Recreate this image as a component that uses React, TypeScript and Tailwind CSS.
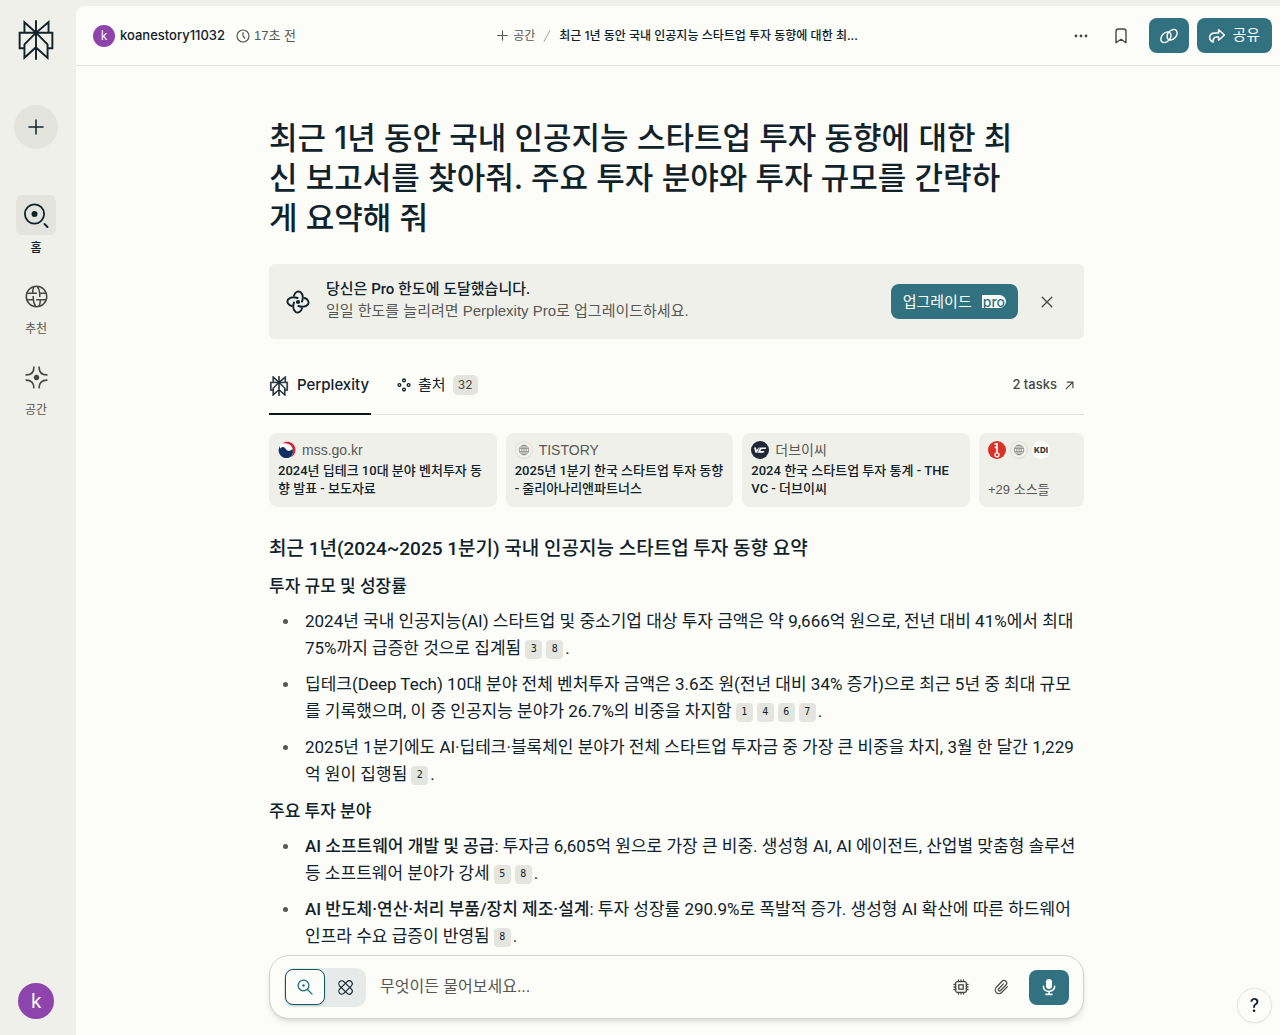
import React, { useState } from "react";
import { SiPerplexity } from "react-icons/si";

type IconProps = { className?: string };

function SearchDotIcon({ className }: IconProps) {
  return (
    <svg viewBox="0 0 26 26" className={className} fill="none" stroke="currentColor" strokeWidth="1.8" strokeLinecap="round" aria-hidden="true">
      <circle cx="11.5" cy="12" r="9.6" />
      <circle cx="11.5" cy="12" r="3" fill="currentColor" stroke="none" />
      <path d="M21.5 22l3 3" />
    </svg>
  );
}

function DiscoverIcon({ className }: IconProps) {
  return (
    <svg viewBox="0 0 24 24" className={className} fill="none" stroke="currentColor" strokeWidth="1.6" aria-hidden="true">
      <circle cx="12" cy="12" r="10.7" />
      <path d="M2.2 8.6H12.4M11.6 15.4H21.8M8.6 11.6V15.4H1.9M15.4 12.4V8.6H22.1M8.6 15C9 18.6 9.8 20.8 11.4 22.6M15.4 9C15 5.4 14.2 3.2 12.6 1.4M9.2 1.8C8.4 3.8 8 6 8 8.4M14.8 22.2C15.6 20.2 16 18 16 15.6" />
    </svg>
  );
}

function SpacesIcon({ className }: IconProps) {
  return (
    <svg viewBox="0 0 24 24" className={className} fill="none" stroke="currentColor" strokeWidth="1.7" strokeLinecap="round" aria-hidden="true">
      <path d="M9.3 1.2C9.3 6.2 6.4 9.3 1.2 9.3M14.7 1.2C14.7 6.2 17.6 9.3 22.8 9.3M1.2 14.7C6.4 14.7 9.3 17.8 9.3 22.8M22.8 14.7C17.6 14.7 14.7 17.8 14.7 22.8" />
      <circle cx="12" cy="12" r="2.8" fill="currentColor" stroke="none" />
    </svg>
  );
}

function PlusIcon({ className }: IconProps) {
  return (
    <svg viewBox="0 0 16 16" className={className} fill="none" stroke="currentColor" strokeWidth="1.5" strokeLinecap="round" aria-hidden="true">
      <path d="M8 1v14M1 8h14" />
    </svg>
  );
}

function ClockIcon({ className }: IconProps) {
  return (
    <svg viewBox="0 0 14 14" className={className} fill="none" stroke="currentColor" strokeWidth="1.2" strokeLinecap="round" aria-hidden="true">
      <circle cx="7" cy="7" r="6" />
      <path d="M7 3.5V7l1.7 2" />
    </svg>
  );
}

function LinkIcon({ className }: IconProps) {
  return (
    <svg viewBox="0 0 20 20" className={className} fill="none" stroke="currentColor" strokeWidth="1.4" strokeLinecap="round" aria-hidden="true">
      <ellipse cx="6.9" cy="11.3" rx="6" ry="4.2" transform="rotate(-48 6.9 11.3)" />
      <ellipse cx="13.1" cy="8.7" rx="6" ry="4.2" transform="rotate(-48 13.1 8.7)" />
    </svg>
  );
}

function ShareIcon({ className }: IconProps) {
  return (
    <svg viewBox="0 0 18 18" className={className} fill="none" stroke="currentColor" strokeWidth="1.5" strokeLinejoin="round" strokeLinecap="round" aria-hidden="true">
      <path d="M10.6 2.8L16.4 8L10.6 13.2V10H8.6C6 10 4.8 12 5 15.2C2.6 14 1.5 12.3 1.6 10.3C1.8 7.4 4 5.9 7 5.9H10.6Z" />
    </svg>
  );
}

function BookmarkIcon({ className }: IconProps) {
  return (
    <svg viewBox="0 0 12 16" className={className} fill="none" stroke="currentColor" strokeWidth="1.4" strokeLinejoin="round" aria-hidden="true">
      <path d="M1 14.8V3.3C1 2 2 1 3.3 1H8.7C10 1 11 2 11 3.3V14.8L6 11.3Z" />
    </svg>
  );
}

// four hooked arms turning round a dot
function ProSwirlIcon({ className }: IconProps) {
  return (
    <svg viewBox="0 0 24 24" className={className} fill="none" stroke="currentColor" strokeWidth="1.9" strokeLinecap="round" aria-hidden="true">
      <circle cx="12" cy="12" r="2.1" fill="currentColor" stroke="none" />
      {[0, 90, 180, 270].map((angle) => (
        <path key={angle} d="M16 11.6C17.2 8 16.8 3.8 14.4 2C12 .6 8.8 2.2 8 5.6" transform={`rotate(${angle} 12 12)`} />
      ))}
    </svg>
  );
}

function SourcesIcon({ className }: IconProps) {
  return (
    <svg viewBox="0 0 14 14" className={className} fill="none" stroke="currentColor" strokeWidth="1.3" aria-hidden="true">
      <circle cx="7" cy="2.4" r="1.4" />
      <circle cx="7" cy="11.6" r="1.4" />
      <circle cx="2.4" cy="7" r="1.4" />
      <circle cx="11.6" cy="7" r="1.4" />
    </svg>
  );
}

function ArrowUpRightIcon({ className }: IconProps) {
  return (
    <svg viewBox="0 0 10 10" className={className} fill="none" stroke="currentColor" strokeWidth="1.3" aria-hidden="true">
      <path d="M1 9L9 1M2 1.2H8.8V8" />
    </svg>
  );
}

function CloseIcon({ className }: IconProps) {
  return (
    <svg viewBox="0 0 12 12" className={className} fill="none" stroke="currentColor" strokeWidth="1.3" strokeLinecap="round" aria-hidden="true">
      <path d="M1.2 1.2l9.6 9.6M10.8 1.2L1.2 10.8" />
    </svg>
  );
}

function ZoomDotIcon({ className }: IconProps) {
  return (
    <svg viewBox="0 0 16 16" className={className} fill="none" stroke="currentColor" strokeWidth="1.3" strokeLinecap="round" aria-hidden="true">
      <circle cx="6.5" cy="6.5" r="5.4" />
      <circle cx="6.5" cy="6.5" r="1.2" fill="currentColor" stroke="none" />
      <path d="M10.5 10.5l4.6 4.6" />
    </svg>
  );
}

function ResearchIcon({ className }: IconProps) {
  return (
    <svg viewBox="0 0 16 16" className={className} fill="none" stroke="currentColor" strokeWidth="1.2" aria-hidden="true">
      <rect x="-.8" y="4.8" width="17.6" height="6.4" rx="3.4" transform="rotate(45 8 8)" />
      <rect x="-.8" y="4.8" width="17.6" height="6.4" rx="3.4" transform="rotate(-45 8 8)" />
    </svg>
  );
}

function ChipIcon({ className }: IconProps) {
  return (
    <svg viewBox="0 0 16 16" className={className} fill="none" stroke="currentColor" strokeWidth="1.3" strokeLinecap="round" aria-hidden="true">
      <rect x="2.7" y="2.7" width="10.6" height="10.6" rx="1.6" />
      <rect x="5.8" y="5.8" width="4.4" height="4.4" />
      <path d="M5.5 2.5V1M8 2.5V1M10.5 2.5V1M5.5 15v-1.5M8 15v-1.5M10.5 15v-1.5M2.5 5.5H1M2.5 8H1M2.5 10.5H1M15 5.5h-1.5M15 8h-1.5M15 10.5h-1.5" />
    </svg>
  );
}

function PaperclipIcon({ className }: IconProps) {
  return (
    <svg viewBox="0 0 24 24" className={className} fill="none" stroke="currentColor" strokeWidth="1.8" strokeLinecap="round" strokeLinejoin="round" aria-hidden="true">
      <path d="M15.6 7.2l-7 7.4a1.9 1.9 0 0 0 2.8 2.7L19.4 9a4 4 0 0 0-5.8-5.6L5 12.4a5.6 5.6 0 0 0 8 7.9L21.6 11.4" />
    </svg>
  );
}

function MicIcon({ className }: IconProps) {
  return (
    <svg viewBox="0 0 14 18" className={className} fill="none" stroke="currentColor" strokeWidth="1.6" strokeLinecap="round" aria-hidden="true">
      <rect x="4" y="1" width="6" height="10" rx="3" fill="currentColor" stroke="none" />
      <path d="M1.4 8.4C1.4 15 12.6 15 12.6 8.4M7 13.4V16M4 16.4H10" />
    </svg>
  );
}

function GlobeBadge() {
  return (
    <svg viewBox="0 0 18 18" className="size-[18px] shrink-0" fill="none" stroke="#8b8c87" strokeWidth="0.9" aria-hidden="true">
      <circle cx="9" cy="9" r="8.4" fill="#f3f3ee" stroke="#dadad4" />
      <circle cx="9" cy="9" r="4.8" />
      <ellipse cx="9" cy="9" rx="2.2" ry="4.8" />
      <path d="M9 4.2v9.6M4.6 7.4h8.8M4.6 10.6h8.8" />
    </svg>
  );
}

function TaegukBadge() {
  return (
    <svg viewBox="0 0 18 18" className="size-[18px] shrink-0" aria-hidden="true">
      <circle cx="9" cy="9" r="8.5" fill="#fff" />
      <path d="M4 2.6C8.5-.9 15.6.8 17.2 7C18.2 11 16.2 14.6 13 16.4C15.2 13.6 15.9 9.6 14.2 6.4C12.2 2.8 8 1.5 4 2.6Z" fill="#d8232f" />
      <path d="M2.4 4.2C.2 7-.1 11.2 2.4 14.2C5.2 17.6 10.2 18 13 15.4C15.2 13.4 15.4 10.2 14.4 7.8C13.4 9.4 11.4 10.4 9.5 9.6C7.6 8.8 7.6 6 5 5.9C3.6 5.9 2.6 6.7 2 7.8C1.8 6.4 1.9 5.2 2.4 4.2Z" fill="#12305f" />
    </svg>
  );
}

function VcBadge() {
  return (
    <svg viewBox="0 0 18 18" className="size-[18px] shrink-0" aria-hidden="true">
      <circle cx="9" cy="9" r="9" fill="#232837" />
      <path d="M3 6.4H5L5.5 9.3L7.8 6.4H15.3L14.6 8H10.6L9.3 10.1H13.4L12.5 11.8H4.5Z" fill="#fff" />
      <path d="M8.9 6.2L6.2 11.9" stroke="#232837" strokeWidth="0.7" />
    </svg>
  );
}

function RedKeyBadge() {
  return (
    <svg viewBox="0 0 18 18" className="size-[18px] shrink-0" aria-hidden="true">
      <circle cx="9" cy="9" r="9" fill="#d93228" />
      <path d="M9 2v10M9 3H6.5M9 6.3H6.8" stroke="#fff" strokeWidth="1.7" fill="none" />
      <circle cx="9" cy="13.8" r="2" stroke="#fff" strokeWidth="1.3" fill="none" />
    </svg>
  );
}

function KdiBadge() {
  return (
    <span className="flex size-[18px] shrink-0 items-center justify-center rounded-full bg-white font-['Inter'] text-[8px] font-extrabold text-[#333]">
      KDI
    </span>
  );
}

const navItems = [
  { label: "홈", Icon: SearchDotIcon, active: true },
  { label: "추천", Icon: DiscoverIcon, active: false },
  { label: "공간", Icon: SpacesIcon, active: false },
];

const sources = [
  { site: "mss.go.kr", title: "2024년 딥테크 10대 분야 벤처투자 동향 발표 - 보도자료", Badge: TaegukBadge },
  { site: "TISTORY", title: "2025년 1분기 한국 스타트업 투자 동향 - 줄리아나리앤파트너스", Badge: GlobeBadge },
  { site: "더브이씨", title: "2024 한국 스타트업 투자 통계 - THE VC - 더브이씨", Badge: VcBadge },
];

type Point = { lead?: string; text: string; refs: number[] };

const sections: { heading: string; points: Point[] }[] = [
  {
    heading: "투자 규모 및 성장률",
    points: [
      {
        text: "2024년 국내 인공지능(AI) 스타트업 및 중소기업 대상 투자 금액은 약 9,666억 원으로, 전년 대비 41%에서 최대 75%까지 급증한 것으로 집계됨",
        refs: [3, 8],
      },
      {
        text: "딥테크(Deep Tech) 10대 분야 전체 벤처투자 금액은 3.6조 원(전년 대비 34% 증가)으로 최근 5년 중 최대 규모를 기록했으며, 이 중 인공지능 분야가 26.7%의 비중을 차지함",
        refs: [1, 4, 6, 7],
      },
      {
        text: "2025년 1분기에도 AI·딥테크·블록체인 분야가 전체 스타트업 투자금 중 가장 큰 비중을 차지, 3월 한 달간 1,229억 원이 집행됨",
        refs: [2],
      },
    ],
  },
  {
    heading: "주요 투자 분야",
    points: [
      {
        lead: "AI 소프트웨어 개발 및 공급",
        text: ": 투자금 6,605억 원으로 가장 큰 비중. 생성형 AI, AI 에이전트, 산업별 맞춤형 솔루션 등 소프트웨어 분야가 강세",
        refs: [5, 8],
      },
      {
        lead: "AI 반도체·연산·처리 부품/장치 제조·설계",
        text: ": 투자 성장률 290.9%로 폭발적 증가. 생성형 AI 확산에 따른 하드웨어 인프라 수요 급증이 반영됨",
        refs: [8],
      },
    ],
  },
];

function Sidebar() {
  return (
    <aside className="flex w-[76px] shrink-0 flex-col items-center pt-5 pr-1 pb-4">
      <a href="#" aria-label="Perplexity">
        <SiPerplexity className="size-10" />
      </a>
      <button aria-label="새 스레드" className="mt-[45px] flex size-11 items-center justify-center rounded-full bg-[#e4e4df]">
        <PlusIcon className="size-4" />
      </button>
      <nav className="mt-[46px] flex flex-col gap-5">
        {navItems.map(({ label, Icon, active }) => (
          <a key={label} href="#" className="flex flex-col items-center gap-[5px]">
            <span className={active ? "flex size-10 items-center justify-center rounded-md bg-[#e4e4df]" : "flex size-10 items-center justify-center text-[#474843]"}>
              <Icon className={active ? "size-[26px]" : "size-[23px]"} />
            </span>
            <span className={active ? "text-xs leading-4 font-medium" : "text-xs leading-4 text-[#575853]"}>{label}</span>
          </a>
        ))}
      </nav>
      <button className="mt-auto flex size-9 items-center justify-center rounded-full bg-[#8e44ad] font-['Noto_Sans'] text-xl text-white">k</button>
    </aside>
  );
}

function TopBar() {
  return (
    <header className="grid h-[60px] shrink-0 grid-cols-[1fr_auto_1fr] items-center border-b border-[#e4e5df] pr-2 pl-[17px]">
      <div className="flex items-center text-[13px]">
        <span className="flex size-[22px] items-center justify-center rounded-full bg-[#8e44ad] font-['Noto_Sans'] text-xs text-white">k</span>
        <a href="#" className="ml-[5px] font-['Inter'] text-[13px] font-medium">koanestory11032</a>
        <ClockIcon className="ml-[11px] size-[14px] text-[#575853]" />
        <span className="ml-1 text-[#575853]">17초 전</span>
      </div>
      <div className="flex items-center pr-[10px] text-xs">
        <button className="flex items-center gap-[5px] text-[#575853]">
          <PlusIcon className="size-[11px]" />
          공간
        </button>
        <svg viewBox="0 0 8 12" className="mx-2 h-3 w-2" stroke="#a0a19b" aria-hidden="true">
          <path d="M1 11.5L7 .5" />
        </svg>
        <span className="font-['Inter','Noto_Sans_CJK_KR',sans-serif] font-medium">최근 1년 동안 국내 인공지능 스타트업 투자 동향에 대한 최...</span>
      </div>
      <div className="flex items-center justify-end">
        <button aria-label="더 보기" className="flex size-10 items-center justify-center">
          <svg viewBox="0 0 14 4" className="h-1 w-[14px]" fill="#474843" aria-hidden="true">
            <circle cx="2" cy="2" r="1.4" />
            <circle cx="7" cy="2" r="1.4" />
            <circle cx="12" cy="2" r="1.4" />
          </svg>
        </button>
        <button aria-label="북마크" className="flex size-10 items-center justify-center text-[#474843]">
          <BookmarkIcon className="h-4 w-3" />
        </button>
        <button aria-label="링크 복사" className="ml-2 flex h-[35px] w-10 items-center justify-center rounded-lg bg-[#32717f] text-white">
          <LinkIcon className="size-5" />
        </button>
        <button className="ml-2 flex h-[35px] items-center gap-[6px] rounded-lg bg-[#32717f] pr-3 pl-[11px] text-[15px] text-white">
          <ShareIcon className="size-[18px]" />
          공유
        </button>
      </div>
    </header>
  );
}

function ProBanner({ onClose }: { onClose: () => void }) {
  return (
    <section className="mt-[26px] flex h-[75px] items-center rounded-md bg-[#f0f0eb] pr-[22px] pl-[17px] text-[15px] leading-[22px]">
      <ProSwirlIcon className="size-6" />
      <div className="ml-4 flex-1 pb-[3px]">
        <p className="font-['Roboto','Noto_Sans_CJK_KR',sans-serif] font-medium">당신은 Pro 한도에 도달했습니다.</p>
        <p className="text-[#575853]">일일 한도를 늘리려면 Perplexity Pro로 업그레이드하세요.</p>
      </div>
      <button className="flex h-[35px] items-center gap-[10px] rounded-lg bg-[#32717f] px-3 text-white">
        업그레이드
        <span className="flex h-[13px] items-center rounded-r-full bg-white px-px font-['Inter'] text-sm leading-none font-medium text-[#32717f]">
          pro
        </span>
      </button>
      <button aria-label="닫기" onClick={onClose} className="ml-[14px] flex size-[30px] items-center justify-center text-[#474843]">
        <CloseIcon className="size-3" />
      </button>
    </section>
  );
}

function Tabs() {
  return (
    <div className="mt-[17px] flex h-[59px] border-b border-[#e4e5df] text-[15px]">
      <button className="-mb-px flex items-center gap-2 border-b-2 border-[#091717] pt-[2px] pr-[2px] font-['Inter'] font-medium">
        <SiPerplexity className="size-5" stroke="currentColor" strokeWidth="0.6" />
        Perplexity
      </button>
      <button className="ml-[26px] flex items-center gap-[7px]">
        <SourcesIcon className="size-[14px]" />
        출처
        <span className="flex h-5 w-[25px] items-center justify-center rounded-[5px] bg-[#e5e5e0] font-['Inter'] text-xs text-[#474843]">32</span>
      </button>
      <button className="ml-auto flex items-center gap-2 pr-[10px] font-['Inter'] text-[13px] font-medium text-[#474843]">
        2 tasks
        <ArrowUpRightIcon className="size-[9px]" />
      </button>
    </div>
  );
}

function SourceCards() {
  return (
    <div className="mt-[18px] flex gap-[9px]">
      {sources.map(({ site, title, Badge }) => (
        <a key={site} href="#" className="h-[74px] min-w-0 flex-1 rounded-lg bg-[#f0f0eb] px-[9px] pt-2">
          <span className="flex items-center gap-[6px] text-sm leading-[18px] text-[#575853]">
            <Badge />
            {site}
          </span>
          <span className="mt-[3px] block font-['Roboto','Noto_Sans_CJK_KR',sans-serif] text-[13px] leading-[18px] font-medium">{title}</span>
        </a>
      ))}
      <button className="flex h-[74px] w-[105px] flex-col justify-between rounded-lg bg-[#f0f0eb] px-[9px] py-2 text-left text-[13px] leading-[18px] text-[#575853]">
        <span className="flex gap-1">
          <RedKeyBadge />
          <GlobeBadge />
          <KdiBadge />
        </span>
        +29 소스들
      </button>
    </div>
  );
}

function Answer() {
  return (
    <article className="mt-7 font-['Roboto','Noto_Sans_CJK_KR',sans-serif] text-[17px] leading-[27px]">
      <h2 className="text-[19px] leading-7 font-medium">최근 1년(2024~2025 1분기) 국내 인공지능 스타트업 투자 동향 요약</h2>
      {sections.map((section) => (
        <section key={section.heading} className="mt-[10px]">
          <h3 className="font-medium">{section.heading}</h3>
          <ul className="mt-2 flex flex-col gap-[9px]">
            {section.points.map((point) => (
              <li key={point.text} className="flex">
                <span className="mt-[11px] mr-[17px] ml-[14px] size-[5px] shrink-0 rounded-full bg-[#575853]" />
                <p>
                  {point.lead && <strong className="font-medium">{point.lead}</strong>}
                  {point.text}
                  {point.refs.map((n) => (
                    <a key={n} href="#" className="ml-1 inline-flex h-[19px] w-[17px] items-center justify-center rounded bg-[#e5e5e0] align-[2px] font-['DejaVu_Sans_Mono'] text-[10px] leading-none">
                      {n}
                    </a>
                  ))}
                  <span className="ml-[2px]">.</span>
                </p>
              </li>
            ))}
          </ul>
        </section>
      ))}
    </article>
  );
}

function Composer() {
  return (
    <form className="flex h-16 w-full items-center rounded-[20px] border border-[#d3d4cd] bg-[#fcfcf9] px-[14px] shadow-md" onSubmit={(e) => e.preventDefault()}>
      <div className="flex h-[39px] items-center rounded-[10px] bg-[#e6ebea] px-px">
        <button type="button" aria-label="검색" className="flex h-9 w-10 items-center justify-center rounded-lg border border-[#0f5763] bg-[#fcfcf9] text-[#20707d] shadow-sm">
          <ZoomDotIcon className="size-4" />
        </button>
        <button type="button" aria-label="연구" className="flex h-9 w-10 items-center justify-center">
          <ResearchIcon className="size-[15px]" />
        </button>
      </div>
      <input aria-label="질문" placeholder="무엇이든 물어보세요..." className="ml-[14px] min-w-0 flex-1 bg-transparent text-base outline-none placeholder:text-[#575853]" />
      <button type="button" aria-label="모델" className="flex size-10 items-center justify-center text-[#474843]">
        <ChipIcon className="size-4" />
      </button>
      <button type="button" aria-label="파일 첨부" className="flex size-10 items-center justify-center text-[#474843]">
        <PaperclipIcon className="size-4" />
      </button>
      <button type="button" aria-label="음성 입력" className="ml-2 flex h-[35px] w-10 items-center justify-center rounded-lg bg-[#32717f] text-white">
        <MicIcon className="h-[18px] w-[14px]" />
      </button>
    </form>
  );
}

export default function App() {
  const [showBanner, setShowBanner] = useState(true);

  return (
    <div className="flex h-screen overflow-hidden bg-[#f0f0eb] font-['Liberation_Sans','Noto_Sans_CJK_KR',sans-serif] text-[#10222a]">
      <Sidebar />
      <main className="mt-[6px] flex min-w-0 flex-1 flex-col rounded-tl-lg bg-[#fcfcf9]">
        <TopBar />
        <div className="min-h-0 flex-1 overflow-hidden pr-[3px]">
          <div className="mx-auto max-w-[815px] pt-[52px]">
            <h1 className="pr-16 font-['Inter','Noto_Sans_CJK_KR',sans-serif] text-[31px] leading-10 font-medium">
              최근 1년 동안 국내 인공지능 스타트업 투자 동향에 대한 최신 보고서를 찾아줘. 주요 투자 분야와 투자 규모를 간략하게 요약해 줘
            </h1>
            {showBanner && <ProBanner onClose={() => setShowBanner(false)} />}
            <Tabs />
            <SourceCards />
            <Answer />
          </div>
        </div>
        <div className="shrink-0 pr-[3px] pb-4">
          <div className="mx-auto max-w-[815px]">
            <Composer />
          </div>
        </div>
      </main>
      <button aria-label="도움말" className="fixed right-2 bottom-3 flex size-[35px] items-center justify-center rounded-full border border-[#e4e5df] bg-[#fcfcf9] font-['Inter'] text-lg font-medium shadow-xs">
        ?
      </button>
    </div>
  );
}
